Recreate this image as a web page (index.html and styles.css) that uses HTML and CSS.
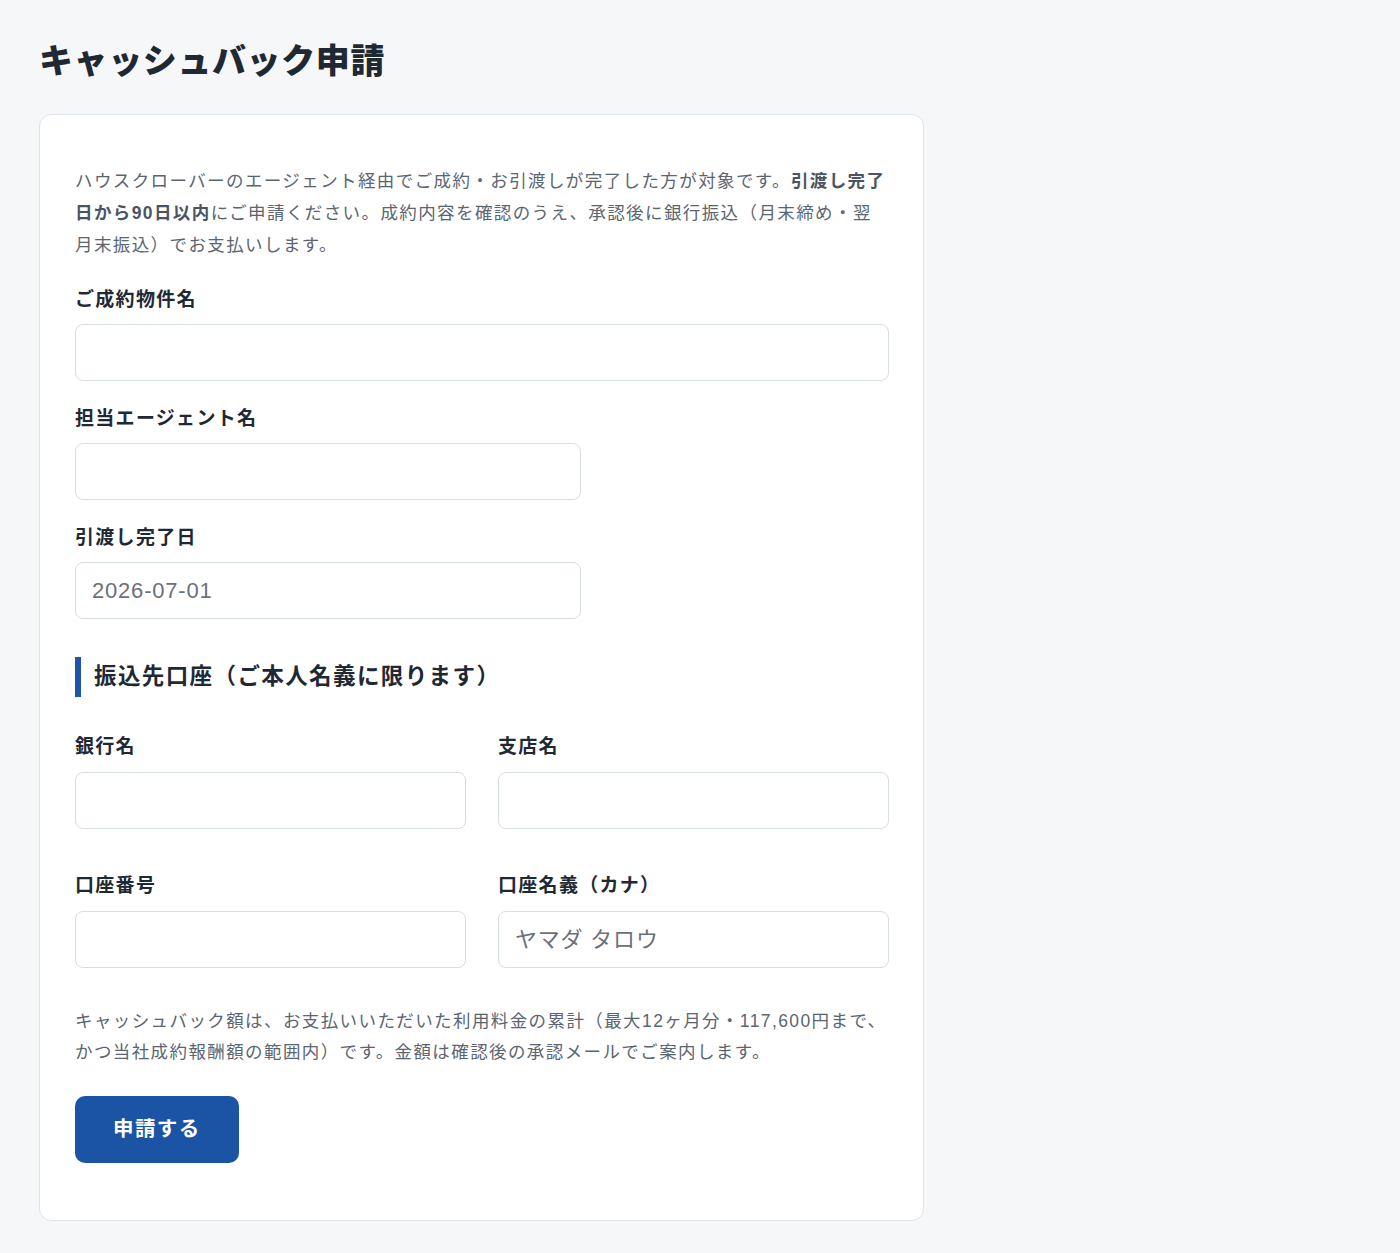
FILE: index.html
```html
<!DOCTYPE html>
<html lang="ja">
<head>
<meta charset="utf-8">
<title>キャッシュバック申請</title>
<link rel="stylesheet" href="styles.css">
</head>
<body>
<main class="page">
  <h1 class="page-title">キャッシュバック申請</h1>
  <form class="card">
    <p class="lead">ハウスクローバーのエージェント経由でご成約・お引渡しが完了した方が対象です。<strong>引渡し完了<br>日から90日以内</strong>にご申請ください。成約内容を確認のうえ、承認後に銀行振込（月末締め・翌<br>月末振込）でお支払いします。</p>

    <div class="field">
      <label class="label" for="property">ご成約物件名</label>
      <input class="input" id="property" type="text">
    </div>
    <div class="field">
      <label class="label" for="agent">担当エージェント名</label>
      <input class="input input-half" id="agent" type="text">
    </div>
    <div class="field">
      <label class="label" for="handover">引渡し完了日</label>
      <input class="input input-half" id="handover" type="text" placeholder="2026-07-01">
    </div>

    <h2 class="section-title">振込先口座（ご本人名義に限ります）</h2>

    <div class="grid">
      <div class="field">
        <label class="label" for="bank">銀行名</label>
        <input class="input" id="bank" type="text">
      </div>
      <div class="field">
        <label class="label" for="branch">支店名</label>
        <input class="input" id="branch" type="text">
      </div>
      <div class="field">
        <label class="label" for="account">口座番号</label>
        <input class="input" id="account" type="text">
      </div>
      <div class="field">
        <label class="label" for="holder">口座名義（カナ）</label>
        <input class="input" id="holder" type="text" placeholder="ヤマダ タロウ">
      </div>
    </div>

    <p class="note">キャッシュバック額は、お支払いいただいた利用料金の累計（最大12ヶ月分・117,600円まで、<br>かつ当社成約報酬額の範囲内）です。金額は確認後の承認メールでご案内します。</p>

    <button class="submit" type="button">申請する</button>
  </form>
</main>
</body>
</html>
```

FILE: styles.css
```css
* { box-sizing: border-box; }

html, body {
  margin: 0;
  padding: 0;
  background: #f6f7f9;
}

body {
  font-family: "Liberation Sans", "Noto Sans CJK JP", sans-serif;
  color: #1f2933;
}

.page {
  padding: 40px 39px 32px;
}

.page-title {
  margin: 0 0 31px;
  font-size: 34px;
  line-height: 43px;
  font-weight: 900;
  letter-spacing: 0.6px;
  color: #1f2933;
}

.card {
  width: 885px;
  background: #ffffff;
  border: 1px solid #dfe4ea;
  border-radius: 12px;
  padding: 50px 34px 57px 35px;
}

.lead {
  margin: 0 0 25px;
  font-size: 17.5px;
  line-height: 32px;
  letter-spacing: 1.4px;
  color: #5b6570;
}

.lead strong {
  font-weight: 700;
  color: #4b5561;
}

.field {
  display: flex;
  flex-direction: column;
  margin-bottom: 24px;
}

.label {
  font-size: 19px;
  line-height: 28px;
  font-weight: 700;
  letter-spacing: 1.3px;
  color: #1f2933;
  margin-bottom: 10px;
}

.input {
  width: 100%;
  height: 57px;
  border: 1px solid #d8dee5;
  border-radius: 8px;
  background: #ffffff;
  padding: 0 16px;
  font-family: "Liberation Sans", "Noto Sans CJK JP", sans-serif;
  font-size: 22px;
  letter-spacing: 0.8px;
  color: #1f2933;
  outline: none;
}

.input::placeholder {
  color: #6b7079;
}

.input-half {
  max-width: 506px;
}

.section-title {
  margin: 38px 0 36px;
  border-left: 6px solid #1d56a8;
  padding-left: 13px;
  font-size: 22.5px;
  line-height: 40px;
  font-weight: 700;
  letter-spacing: 1.4px;
  color: #1f2933;
}

.grid {
  display: grid;
  grid-template-columns: 1fr 1fr;
  column-gap: 32px;
  row-gap: 43px;
}

.grid .field {
  margin-bottom: 0;
}

.grid .label {
  margin-bottom: 11px;
}

.note {
  margin: 38px 0 28px;
  font-size: 17.5px;
  line-height: 31px;
  letter-spacing: 1.4px;
  color: #5b6570;
}

.submit {
  display: inline-block;
  height: 67px;
  padding: 0 38px 5px;
  border: none;
  border-radius: 10px;
  background: #1b54a5;
  color: #ffffff;
  font-family: "Liberation Sans", "Noto Sans CJK JP", sans-serif;
  font-size: 20.5px;
  font-weight: 700;
  letter-spacing: 1.4px;
  cursor: pointer;
}
```
